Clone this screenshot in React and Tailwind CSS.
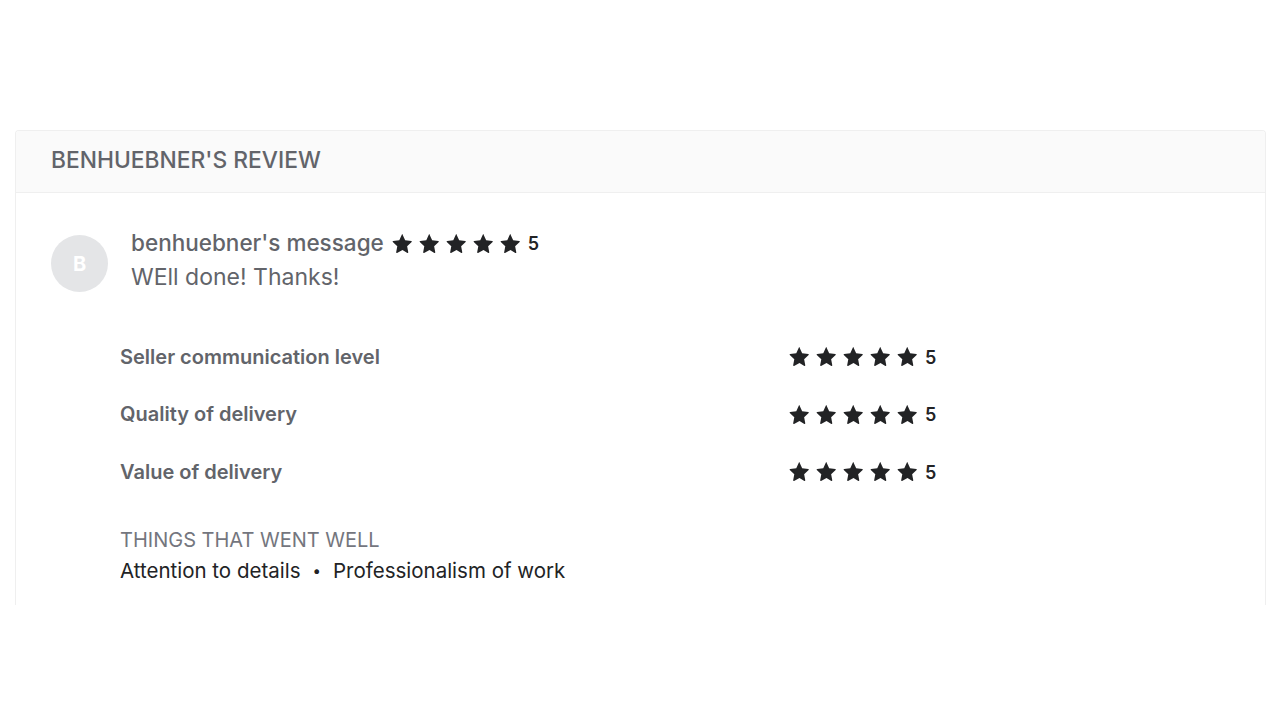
import { useState } from "react";

const ratings = [
  { label: "Seller communication level", value: 5 },
  { label: "Quality of delivery", value: 5 },
  { label: "Value of delivery", value: 5 },
];

const highlights = ["Attention to details", "Professionalism of work"];

const Star = () => (
  <svg viewBox="0 0 24 24" className="h-[21px] w-[21px]" fill="#222325">
    <path
      d="M12 1.8l3.05 6.4 7 .9c.6.08.84.82.4 1.24l-5.15 4.85 1.3 6.95c.11.6-.52 1.05-1.05.76L12 19.5l-6.2 3.4c-.53.29-1.16-.16-1.05-.76l1.3-6.95L.9 10.34c-.44-.42-.2-1.16.4-1.24l7-.9L11.3 1.8c.27-.56 1.07-.56 1.34 0z"
      strokeLinejoin="round"
    />
  </svg>
);

const StarRating = ({ value }) => (
  <div className="flex items-center gap-[6px]">
    {[0, 1, 2, 3, 4].map((i) => (
      <Star key={i} />
    ))}
    <span className="ml-[1px] mt-[2px] text-[18px] leading-none font-semibold text-[#222325]">
      {value}
    </span>
  </div>
);

const App = () => {
  const [author] = useState("benhuebner");

  return (
    <div
      className="min-h-[720px] bg-white pt-[130px] pl-[15px] pr-[14px]"
      style={{ fontFamily: "Inter, 'Noto Sans', sans-serif" }}
    >
      <section className="h-[475px] rounded-t-[4px] border border-b-0 border-[#efefef] overflow-hidden">
        <div className="flex h-[62px] items-center border-b border-[#efefef] bg-[#fafafa] px-[35px]">
          <h2 className="mt-[-3px] text-[22.8px] font-medium uppercase text-[#62646a]">
            {author}'s review
          </h2>
        </div>

        <div className="px-[35px] pt-[33px]">
          <div className="flex gap-[23px]">
            <div className="mt-[9px] flex h-[57px] w-[57px] items-center justify-center rounded-full bg-[#e4e5e7] text-[20px] font-bold text-white">
              B
            </div>
            <div>
              <div className="flex h-[34px] items-center gap-[8px]">
                <span className="text-[22.5px] font-medium text-[#62646a]">
                  {author}'s message
                </span>
                <StarRating value={5} />
              </div>
              <p className="text-[23px] leading-[34px] text-[#62646a]">WEll done! Thanks!</p>
            </div>
          </div>

          <div className="mt-[34px] pl-[69px]">
            {ratings.map((item) => (
              <div key={item.label} className="flex h-[57.5px] items-center">
                <span className="w-[669px] text-[20px] font-semibold text-[#62646a]">
                  {item.label}
                </span>
                <StarRating value={item.value} />
              </div>
            ))}

            <div className="mt-[24px]">
              <p className="text-[20px] leading-[30px] uppercase text-[#74767e]">
                Things that went well
              </p>
              <p className="flex items-center text-[20.5px] leading-[32px] text-[#222325]">
                {highlights.map((h, i) => (
                  <span key={h} className="flex items-center">
                    {i > 0 && <span className="mx-[12px] text-[15px]">•</span>}
                    {h}
                  </span>
                ))}
              </p>
            </div>
          </div>
        </div>
      </section>
    </div>
  );
};

export default App;
